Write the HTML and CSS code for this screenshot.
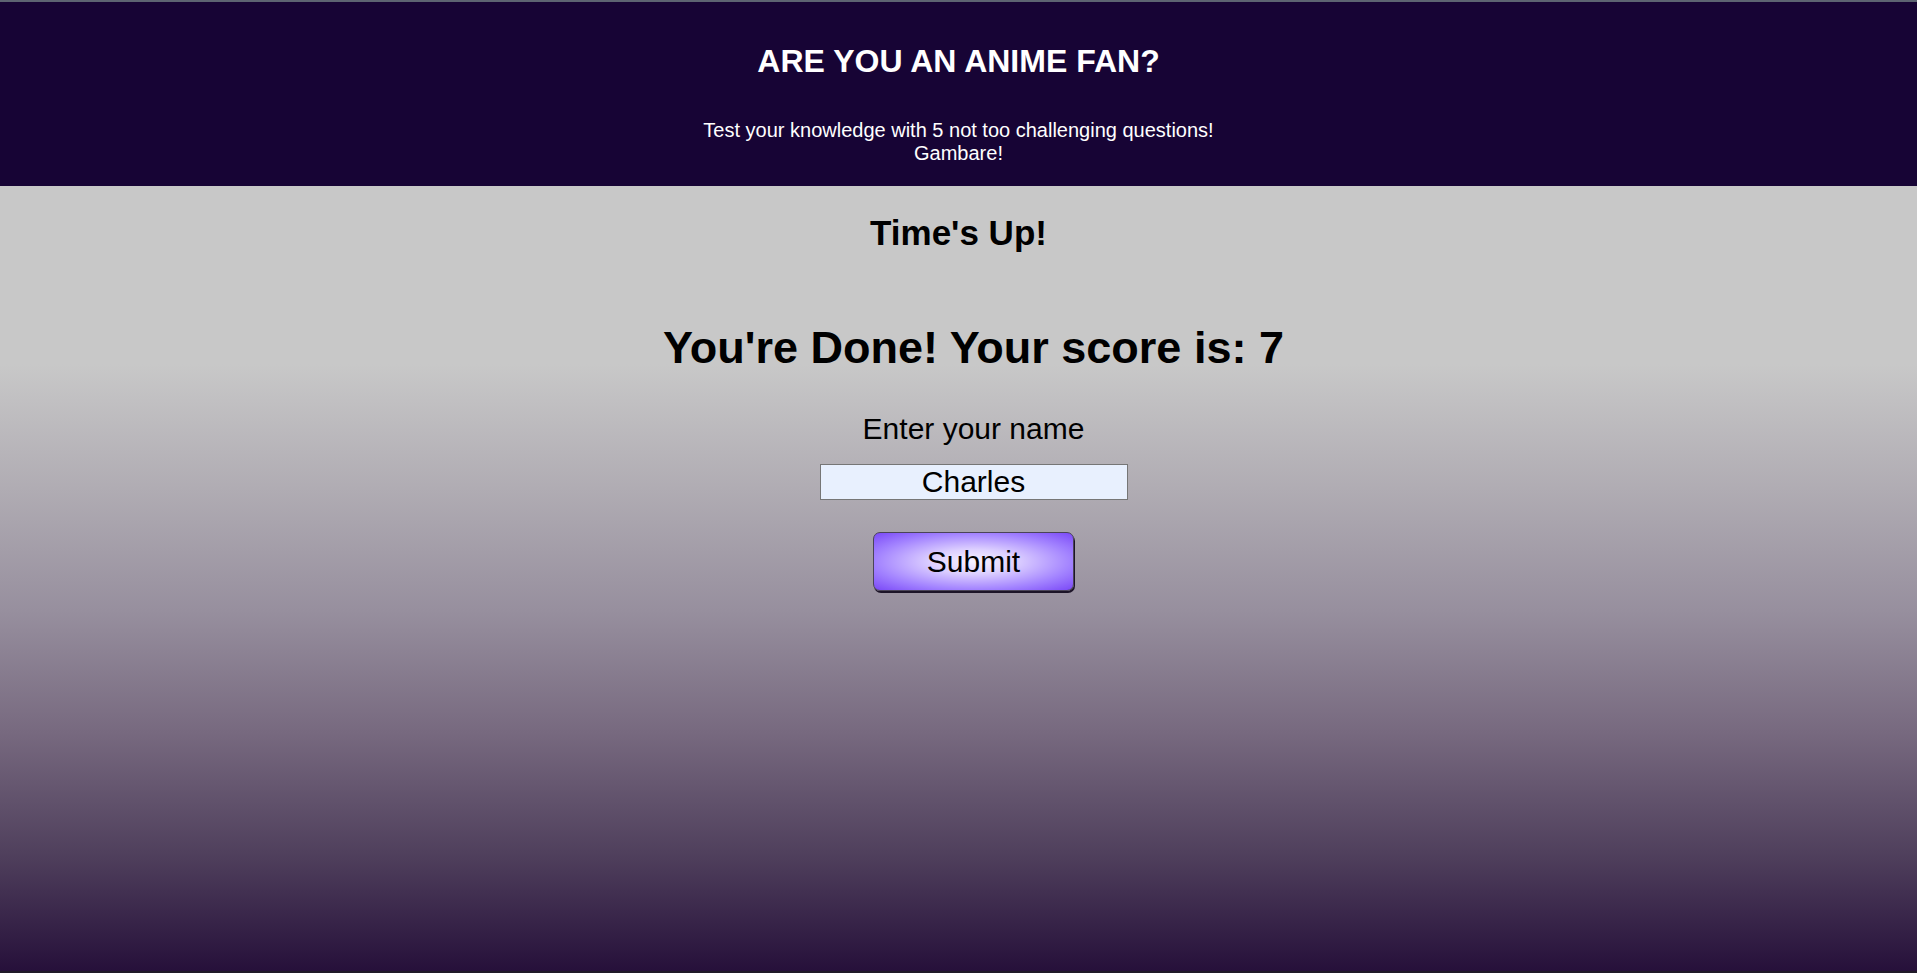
FILE: index.html
```html
<!DOCTYPE html>
<html lang="en">
<head>
<meta charset="utf-8">
<title>Are You An Anime Fan?</title>
<link rel="stylesheet" href="styles.css">
</head>
<body>
<header class="site-header">
  <h1 class="site-title">ARE YOU AN ANIME FAN?</h1>
  <p class="site-subtitle">Test your knowledge with 5 not too challenging questions!<br>Gambare!</p>
</header>
<main class="quiz">
  <h2 class="timer">Time's Up!</h2>
  <section class="result">
    <h2 class="score">You're Done! Your score is: 7</h2>
    <label class="name-label" for="name">Enter your name</label>
    <input class="name-input" id="name" type="text" value="Charles">
    <button class="submit-btn" type="button">Submit</button>
  </section>
</main>
</body>
</html>
```

FILE: styles.css
```css
html, body {
  margin: 0;
  padding: 0;
  height: 100%;
}

body {
  font-family: "Liberation Sans", Arial, sans-serif;
  display: flex;
  flex-direction: column;
  min-height: 100vh;
  color: #000;
}

.site-header {
  background: #170435;
  border-top: 2px solid #5d6472;
  color: #fff;
  text-align: center;
  padding: 41px 0 21px;
}

.site-title {
  margin: 0 0 39px;
  font-size: 32px;
  line-height: 37px;
  font-weight: bold;
}

.site-subtitle {
  margin: 0;
  font-size: 20px;
  line-height: 23px;
}

.quiz {
  flex: 1;
  text-align: center;
  padding-top: 27px;
  border-bottom: 2px solid #201a28;
  background: linear-gradient(to bottom,
    #c8c8c8 0px,
    #c8c8c8 178px,
    #b0acb3 303px,
    #978f9e 425px,
    #77697f 547px,
    #4f3f5c 670px,
    #26103a 100%);
}

.timer {
  margin: 0 0 69px;
  font-size: 35px;
  line-height: 40px;
  font-weight: bold;
}

.result {
  padding-left: 30px;
  display: flex;
  flex-direction: column;
  align-items: center;
}

.score {
  margin: 0 0 37px;
  font-size: 45px;
  line-height: 52px;
  font-weight: bold;
}

.name-label {
  display: block;
  font-size: 30px;
  line-height: 35px;
  margin-bottom: 18px;
}

.name-input {
  box-sizing: border-box;
  width: 308px;
  height: 36px;
  padding: 0;
  margin: 0 0 32px;
  border: 1px solid #767676;
  background: #e8f0fe;
  font-family: "Liberation Sans", Arial, sans-serif;
  font-size: 30px;
  text-align: center;
  color: #000;
}

.submit-btn {
  box-sizing: border-box;
  width: 201px;
  height: 59px;
  padding: 0;
  border: 1px solid #4a4458;
  border-radius: 7px;
  box-shadow: 1px 2px 0 #1c1428;
  background: radial-gradient(ellipse at center, #f8f2ff 0%, #ddd0ff 30%, #a282ff 70%, #7a48f7 100%);
  font-family: "Liberation Sans", Arial, sans-serif;
  font-size: 30px;
  color: #000;
  cursor: pointer;
}
```
